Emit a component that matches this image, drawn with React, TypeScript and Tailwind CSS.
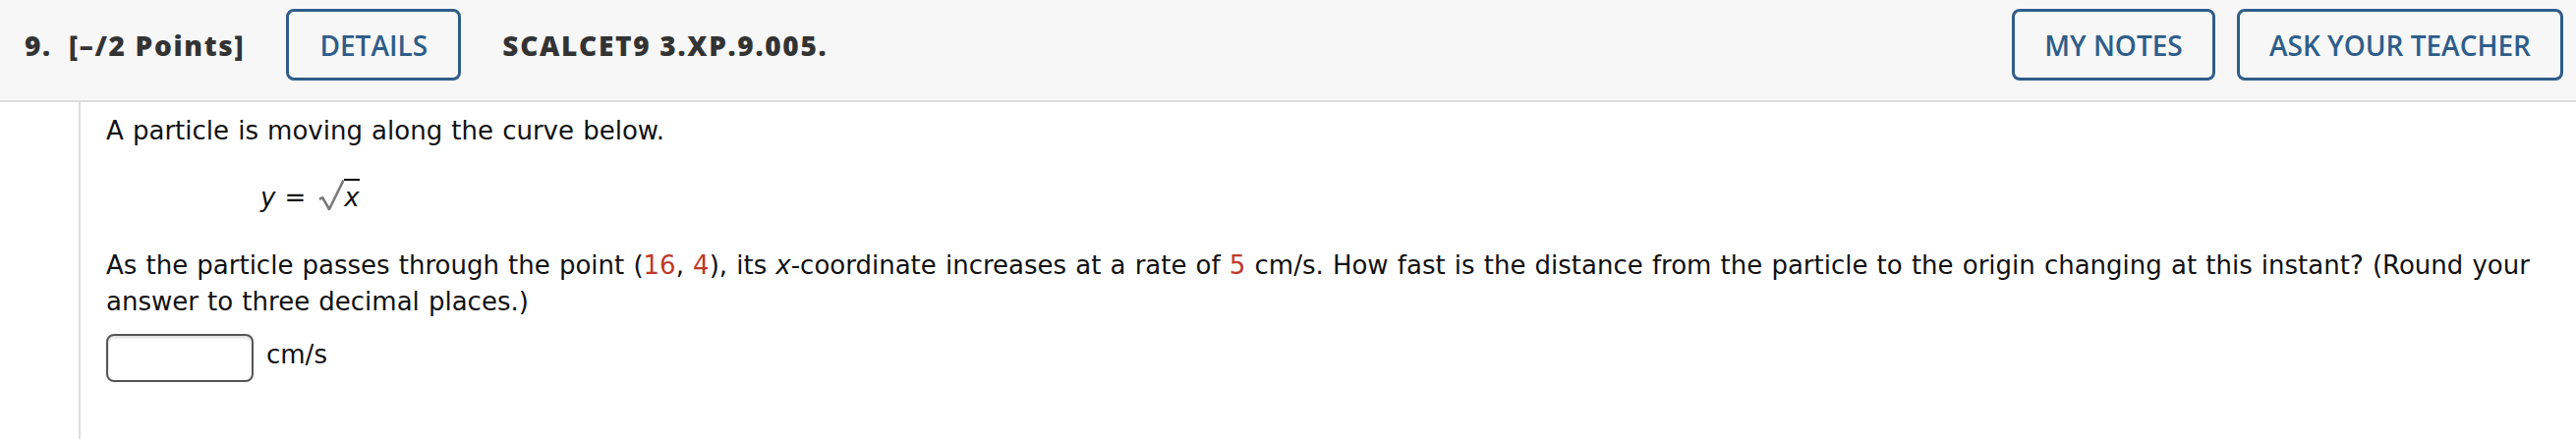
import { FC } from "react";

const Red: FC<{ children: React.ReactNode }> = ({ children }) => (
  <span className="text-[#c0392b]">{children}</span>
);

const OutlineButton: FC<{ label: string; width: string }> = ({ label, width }) => (
  <button
    className={`${width} h-[73px] rounded-[8px] border-[3px] border-[#2e5d8a] bg-transparent text-[28px] font-semibold text-[#2e5d8a]`}
  >
    {label}
  </button>
);

const App: FC = () => {
  return (
    <div className="h-[447px] w-[2621px] overflow-hidden bg-white">
      <header className="flex h-[104px] items-start border-b-2 border-[#dcdcdc] bg-[#f7f7f7] pl-[25px] pr-[13px] pt-[9px] font-['Open_Sans',sans-serif] text-[#333]">
        <div className="flex h-[73px] items-center">
          <span className="text-[28px] font-extrabold tracking-[1.7px]">9.</span>
          <span className="ml-[17px] text-[28px] font-extrabold tracking-[1.7px]">[–/2 Points]</span>
          <div className="ml-[42px]">
            <OutlineButton label="DETAILS" width="w-[178px]" />
          </div>
          <span className="ml-[42px] text-[28px] font-extrabold tracking-[1.7px]">SCALCET9 3.XP.9.005.</span>
        </div>
        <div className="ml-auto flex gap-[22px]">
          <OutlineButton label="MY NOTES" width="w-[207px]" />
          <OutlineButton label="ASK YOUR TEACHER" width="w-[332px]" />
        </div>
      </header>

      <div className="flex h-[343px]">
        <div className="w-[82px] shrink-0 border-r-2 border-[#dedede]" />
        <div className="flex-1 pl-[26px] pr-[20px] pt-[11px] font-['DejaVu_Sans',Verdana,sans-serif] text-[26px] leading-[37px] text-[#111] [word-spacing:0.9px]">
          <p>A particle is moving along the curve below.</p>

          <p className="mt-[30px] pl-[157px]">
            <i>y</i> =
            <span className="ml-[13px] whitespace-nowrap">
              <svg
                width="26"
                height="33"
                viewBox="0 0 26 33"
                className="inline-block align-[-5px]"
              >
                <path
                  d="M1 21 L4 19 L11 31 L25.5 1.5"
                  fill="none"
                  stroke="#7a7a7a"
                  strokeWidth="2.6"
                  strokeLinejoin="round"
                />
              </svg>
              <span className="inline-block border-t-2 border-black pt-[3px] leading-[28px]">
                <i>x</i>
              </span>
            </span>
          </p>

          <p className="mt-[32px]">
            As the particle passes through the point (<Red>16</Red>, <Red>4</Red>), its <i>x</i>-coordinate
            increases at a rate of <Red>5</Red> cm/s. How fast is the distance from the particle to the
            origin changing at this instant? (Round your answer to three decimal places.)
          </p>

          <div className="mt-[14px] flex items-center gap-[13px]">
            <input
              type="text"
              className="h-[49px] w-[150px] rounded-[8px] border-2 border-[#555] bg-white shadow-[inset_0_2px_3px_rgba(0,0,0,0.15)] outline-none"
            />
            <span className="-mt-[6px]">cm/s</span>
          </div>
        </div>
      </div>
    </div>
  );
};

export default App;
